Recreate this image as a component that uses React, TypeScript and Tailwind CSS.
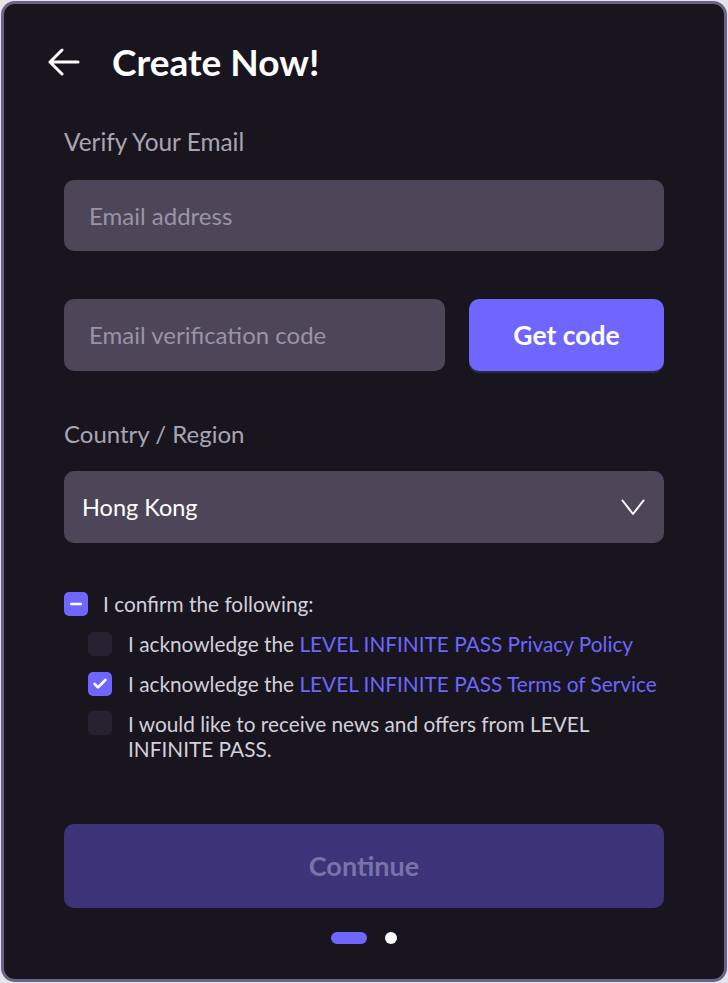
import { Check, Minus } from "lucide-react";

const font = { fontFamily: "Lato, 'Noto Sans', sans-serif" };

const Box = ({ checked }: { checked?: boolean }) =>
  checked ? (
    <span className="flex h-6 w-6 shrink-0 items-center justify-center rounded-[5px] bg-[#6e66ff]">
      <Check className="h-4 w-4 text-white" strokeWidth={4} />
    </span>
  ) : (
    <span className="h-6 w-6 shrink-0 rounded-[5px] bg-[#252130]" />
  );

export default function App() {
  return (
    <div className="h-[983px] w-[728px] bg-[#e6e6e8] pl-px pt-px" style={font}>
      <div className="flex h-[981px] w-[726px] flex-col rounded-[14px] border-[3px] border-[#6b6189] bg-[#18151f] px-[60px]">
        {/* header */}
        <div className="-ml-[16px] mt-[39px] flex items-center gap-[32px]">
          <svg width="32" height="28" viewBox="0 0 32 28" fill="none" stroke="white" strokeWidth="3" strokeLinecap="round" strokeLinejoin="round">
            <path d="M14 2 L2 14 L14 26 M2 14 H30" />
          </svg>
          <h1 className="text-[37px] font-bold leading-none text-white">Create Now!</h1>
        </div>

        <label className="mt-[50px] text-[24.4px] leading-none text-[#a9a5b1]">Verify Your Email</label>
        <div className="mt-[26px] flex h-[71px] items-center rounded-[10px] bg-[#4d4659] px-[25px] text-[24px] text-[#9a94a4]">
          Email address
        </div>

        <div className="mt-[48px] flex gap-[24px]">
          <div className="flex h-[72px] flex-1 items-center rounded-[10px] bg-[#4d4659] px-[25px] text-[24px] text-[#9a94a4]">
            Email verification code
          </div>
          <button className="h-[72px] w-[195px] rounded-[10px] bg-[#6e66ff] text-[26.5px] font-bold text-white shadow-[0_2px_0_#2a2a44]">
            Get code
          </button>
        </div>

        <label className="mt-[51px] text-[24px] leading-none text-[#a9a5b1]">Country / Region</label>
        <div className="mt-[25px] flex h-[72px] items-center justify-between rounded-[10px] bg-[#4d4659] pl-[18px] pr-[19px] text-[23.5px] text-white">
          <span>Hong Kong</span>
          <svg width="24" height="17" viewBox="0 0 24 17" fill="none" stroke="white" strokeWidth="2" strokeLinecap="round" strokeLinejoin="round">
            <path d="M1.5 1.5 L12 15 L22.5 1.5" />
          </svg>
        </div>

        {/* agreements */}
        <div className="mt-[48px] flex items-center gap-[15px] text-[20.8px] leading-[25px]">
          <span className="flex h-6 w-6 items-center justify-center rounded-[5px] bg-[#6e66ff]">
            <Minus className="h-4 w-4 text-white" strokeWidth={4} />
          </span>
          <span className="text-[#d3d0d9]">I confirm the following:</span>
        </div>
        <div className="ml-[24px] mt-[15px] flex flex-col gap-[15px] text-[20.8px] leading-[25px] text-[#d3d0d9]">
          <div className="flex items-center gap-[16px]">
            <Box />
            <span>
              I acknowledge the <span className="text-[#6e66ff]">LEVEL INFINITE PASS Privacy Policy</span>
            </span>
          </div>
          <div className="flex items-center gap-[16px]">
            <Box checked />
            <span>
              I acknowledge the <span className="text-[#6e66ff]">LEVEL INFINITE PASS Terms of Service</span>
            </span>
          </div>
          <div className="flex items-start gap-[16px]">
            <Box />
            <span>I would like to receive news and offers from LEVEL INFINITE PASS.</span>
          </div>
        </div>

        <button className="mt-[63px] h-[84px] shrink-0 rounded-[10px] bg-[#3c3379] text-[27px] font-bold text-[#7a72a9]">
          Continue
        </button>

        <div className="mt-[24px] flex items-center justify-center gap-[18px]">
          <span className="h-3 w-9 rounded-full bg-[#6e66ff]" />
          <span className="h-3 w-3 rounded-full bg-white" />
        </div>
      </div>
    </div>
  );
}
